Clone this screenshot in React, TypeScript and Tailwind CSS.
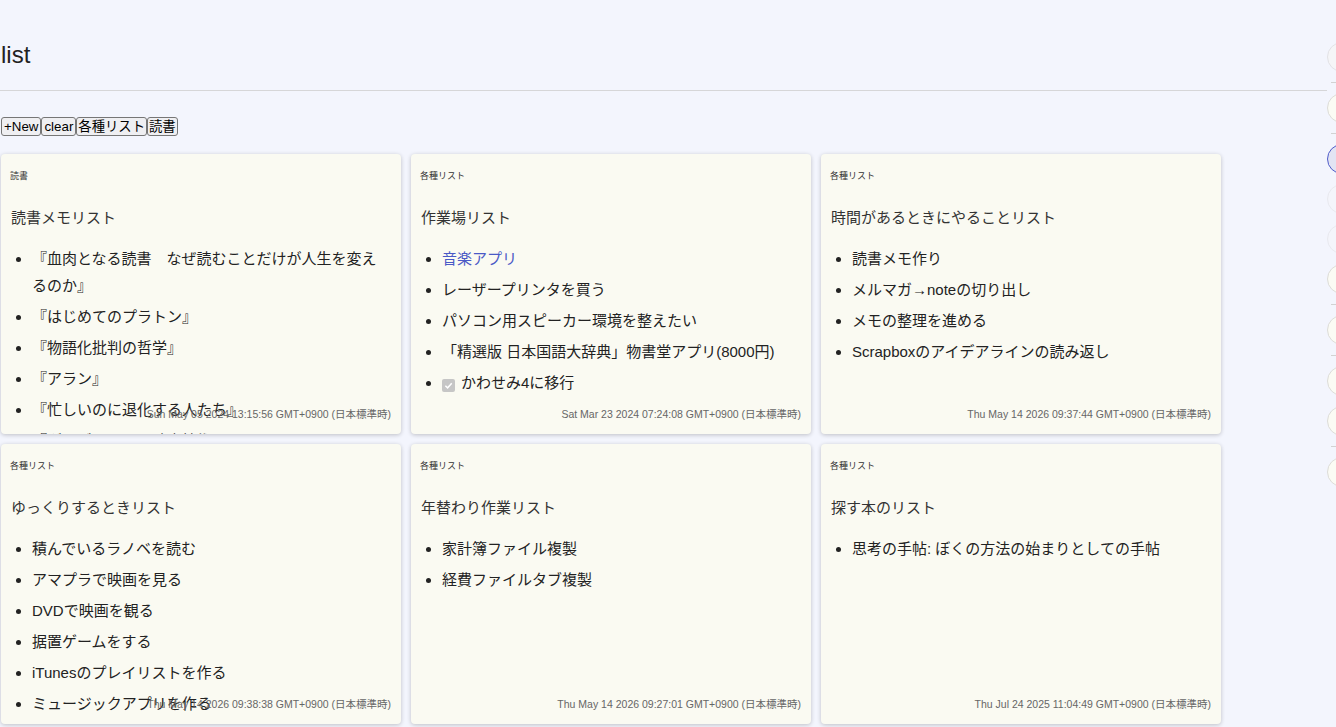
import React from "react";

type Item = { text: string; link?: boolean; checked?: boolean };
type Card = { tag: string; title: string; items: Item[]; date: string };

const cards: Card[] = [
  {
    tag: "読書",
    title: "読書メモリスト",
    items: [
      { text: "『血肉となる読書　なぜ読むことだけが人生を変えるのか』" },
      { text: "『はじめてのプラトン』" },
      { text: "『物語化批判の哲学』" },
      { text: "『アラン』" },
      { text: "『忙しいのに退化する人たち』" },
      { text: "『ダ・ヴィンチの読書技術』" },
      { text: "『思考の整理学』" },
    ],
    date: "Sun May 05 2024 13:15:56 GMT+0900 (日本標準時)",
  },
  {
    tag: "各種リスト",
    title: "作業場リスト",
    items: [
      { text: "音楽アプリ", link: true },
      { text: "レーザープリンタを買う" },
      { text: "パソコン用スピーカー環境を整えたい" },
      { text: "「精選版 日本国語大辞典」物書堂アプリ(8000円)" },
      { text: "かわせみ4に移行", checked: true },
    ],
    date: "Sat Mar 23 2024 07:24:08 GMT+0900 (日本標準時)",
  },
  {
    tag: "各種リスト",
    title: "時間があるときにやることリスト",
    items: [
      { text: "読書メモ作り" },
      { text: "メルマガ→noteの切り出し" },
      { text: "メモの整理を進める" },
      { text: "Scrapboxのアイデアラインの読み返し" },
    ],
    date: "Thu May 14 2026 09:37:44 GMT+0900 (日本標準時)",
  },
  {
    tag: "各種リスト",
    title: "ゆっくりするときリスト",
    items: [
      { text: "積んでいるラノベを読む" },
      { text: "アマプラで映画を見る" },
      { text: "DVDで映画を観る" },
      { text: "据置ゲームをする" },
      { text: "iTunesのプレイリストを作る" },
      { text: "ミュージックアプリを作る" },
    ],
    date: "Thu May 14 2026 09:38:38 GMT+0900 (日本標準時)",
  },
  {
    tag: "各種リスト",
    title: "年替わり作業リスト",
    items: [{ text: "家計簿ファイル複製" }, { text: "経費ファイルタブ複製" }],
    date: "Thu May 14 2026 09:27:01 GMT+0900 (日本標準時)",
  },
  {
    tag: "各種リスト",
    title: "探す本のリスト",
    items: [{ text: "思考の手帖: ぼくの方法の始まりとしての手帖" }],
    date: "Thu Jul 24 2025 11:04:49 GMT+0900 (日本標準時)",
  },
];

type Side = { kind: "circle"; variant: "gray" | "cream" | "active" | "ghost" } | { kind: "sep" };

const side: Side[] = [
  { kind: "circle", variant: "gray" },
  { kind: "sep" },
  { kind: "circle", variant: "cream" },
  { kind: "sep" },
  { kind: "circle", variant: "active" },
  { kind: "circle", variant: "ghost" },
  { kind: "circle", variant: "ghost" },
  { kind: "circle", variant: "cream" },
  { kind: "sep" },
  { kind: "circle", variant: "cream" },
  { kind: "sep" },
  { kind: "circle", variant: "cream" },
  { kind: "circle", variant: "cream" },
  { kind: "sep" },
  { kind: "circle", variant: "cream" },
];

function Circle({ variant }: { variant: string }) {
  if (variant === "active")
    return <div className="w-[30px] h-[30px] rounded-full border border-[#4f5bc9] bg-[#e2e4f3] shrink-0" />;
  if (variant === "ghost")
    return <div className="w-[30px] h-[30px] rounded-full border border-[#e8e9ef] bg-[#f4f5fb] shrink-0" />;
  if (variant === "gray")
    return (
      <div className="w-[30px] h-[30px] rounded-full border border-[#e2e2e6] bg-[#f5f5f7] shrink-0 flex items-center pl-[8px]">
        <div className="w-[2px] h-[8px] bg-[#888]" />
      </div>
    );
  return <div className="w-[30px] h-[30px] rounded-full border border-[#dcdcd8] bg-[#fbfbf4] shrink-0" />;
}

const buttons: { label: string; cls: string }[] = [
  { label: "+New", cls: "px-[2px]" },
  { label: "clear", cls: "px-[2px]" },
  { label: "各種リスト", cls: "px-[1px]" },
  { label: "読書", cls: "px-[1px]" },
];

export default function App() {
  const font = { fontFamily: '"Liberation Sans", "Noto Sans CJK JP", sans-serif' };
  return (
    <div className="w-[1336px] h-[727px] overflow-hidden bg-[#f3f5fd] flex text-[#222]" style={font}>
      <main className="w-[1327px] shrink-0 pl-[1px]">
        <header className="h-[91px] border-b border-[#d6d6d8] pt-[41px] -ml-[1px]">
          <h1 className="text-[24px] leading-[28px] text-[#222] pl-[1px]">list</h1>
        </header>
        <div className="mt-[26px] flex">
          {buttons.map((b) => (
            <button
              key={b.label}
              className={
                "h-[19px] text-[13.33px] leading-[15px] border border-[#767676] rounded-[3px] bg-[#efeff2] text-black " +
                b.cls
              }
            >
              {b.label}
            </button>
          ))}
        </div>
        <div className="mt-[18px] grid grid-cols-[repeat(3,400px)] gap-[10px]">
          {cards.map((c, i) => (
            <div
              key={i}
              className="relative h-[280px] overflow-hidden rounded-[4px] bg-[#fafaf2] shadow-[0_1px_4px_rgba(0,0,0,0.22)] pl-[10px] pr-[10px] pt-[16px]"
            >
              <div className="text-[9px] leading-[12px] text-[#333] -ml-[1px]">{c.tag}</div>
              <div className="mt-[24px] text-[15px] leading-[24px] text-[#333]">{c.title}</div>
              <ul className="mt-[15px] list-disc pl-[21px] pr-[3px] text-[15px] leading-[27px] text-[#222]">
                {c.items.map((it, j) => (
                  <li key={j} className="mb-[4px]">
                    {it.checked && (
                      <span className="inline-flex align-[-2px] mr-[6px] w-[13px] h-[13px] rounded-[2px] bg-[#c6c6c6] items-center justify-center">
                        <svg width="9" height="9" viewBox="0 0 10 10">
                          <path d="M1.5 5.2 L4 7.6 L8.6 2.4" fill="none" stroke="white" strokeWidth="1.6" />
                        </svg>
                      </span>
                    )}
                    {it.link ? <a className="text-[#4a59c6]">{it.text}</a> : it.text}
                  </li>
                ))}
              </ul>
              <div className="absolute right-[10px] bottom-[13px] text-[10.5px] leading-[13px] text-[#666]">
                {c.date}
              </div>
            </div>
          ))}
        </div>
      </main>
      <aside className="w-[60px] shrink-0 pt-[42px] flex flex-col">
        {side.map((s, i) =>
          s.kind === "sep" ? (
            <div key={i} className="my-[10px] ml-[4px] h-px bg-[#d2d2d2]" />
          ) : (
            <div key={i} className={side[i + 1] && side[i + 1].kind === "circle" ? "mb-[10px]" : ""}>
              <Circle variant={s.variant} />
            </div>
          )
        )}
      </aside>
    </div>
  );
}
